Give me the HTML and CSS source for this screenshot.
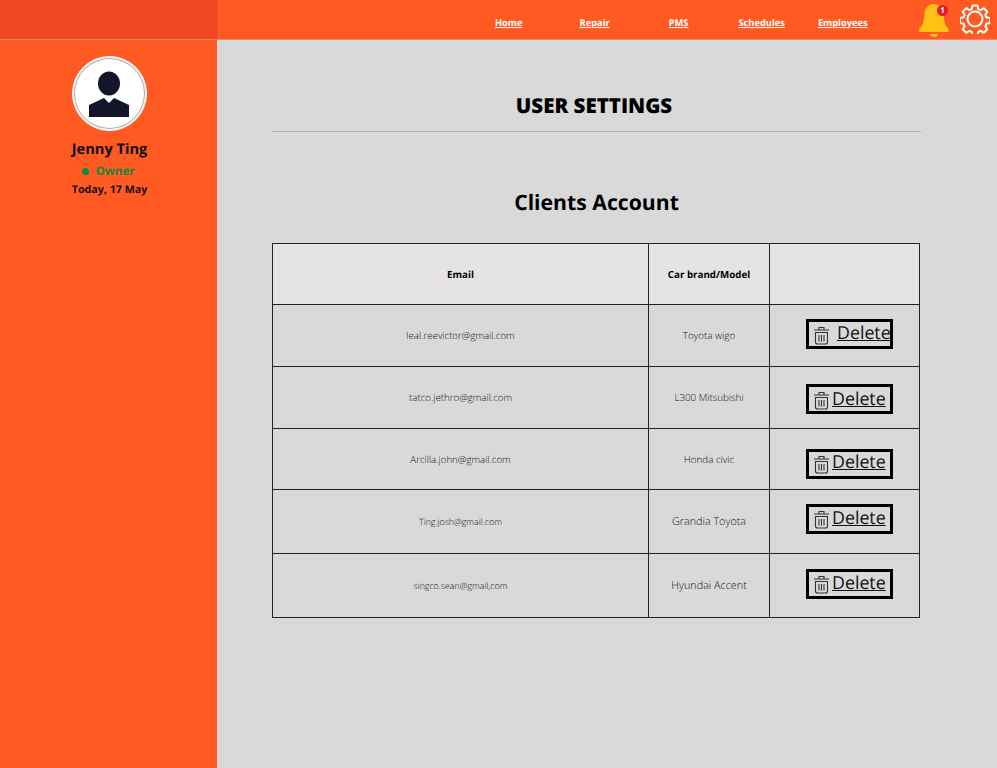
FILE: index.html
```html
<!DOCTYPE html>
<html lang="en">
<head>
<meta charset="utf-8">
<title>User Settings</title>
<link rel="stylesheet" href="styles.css">
</head>
<body>
<header class="topbar">
  <div class="brand"></div>
  <nav class="nav">
    <a class="nav-home" href="#">Home</a>
    <a class="nav-repair" href="#">Repair</a>
    <a class="nav-pms" href="#">PMS</a>
    <a class="nav-sched" href="#">Schedules</a>
    <a class="nav-emp" href="#">Employees</a>
  </nav>
  <div class="top-icons">
    <div class="bell">
      <svg width="32" height="38" viewBox="0 0 32 38"><path fill="#ffc112" d="M16 4c-6 0-9 4.500-9.500 10-.5 6-1 11-5 15-.8 1-.4 3 1 3h27c1.400 0 1.800-2 1-3-4-4-4.500-9-5-15C25 8.500 22 4 16 4z"/><path fill="#ffc112" d="M12 34h8c-.5 2-2 3-4 3s-3.500-1-4-3z"/></svg>
      <span class="badge">1</span>
    </div>
    <svg class="gear" width="30" height="30" viewBox="0 0 30 30" fill="none" stroke="#fff" stroke-width="2" stroke-linejoin="round"><path d="M12.500 1.500h5l.8 3.700 2.300 1 3.200-2 3.500 3.500-2 3.200 1 2.300 3.700.8v5l-3.700.8-1 2.300 2 3.200-3.500 3.500-3.200-2-2.300 1-.8 3.700h-5l-.8-3.700-2.300-1-3.200 2-3.500-3.500 2-3.200-1-2.300-3.700-.8v-5l3.700-.8 1-2.300-2-3.200 3.500-3.500 3.200 2 2.300-1z"/><circle cx="15" cy="15" r="7.500"/></svg>
  </div>
</header>
<div class="shell">
  <aside class="sidebar">
    <div class="avatar">
      <svg width="66" height="66" viewBox="0 0 66 66"><ellipse cx="33" cy="22.500" rx="11" ry="12" fill="#14142b"/><path fill="#14142b" d="M13 44l15-7 5 5 5-5 15 7v12H13z"/></svg>
    </div>
    <div class="user-name">Jenny Ting</div>
    <div class="user-role"><span class="dot"></span>Owner</div>
    <div class="user-date">Today, 17 May</div>
  </aside>
  <main class="content">
    <h1 class="page-title">USER SETTINGS</h1>
    <h2 class="section-title">Clients Account</h2>
    <table class="clients">
      <colgroup><col class="c-email"><col class="c-car"><col class="c-act"></colgroup>
      <thead>
        <tr class="r-head"><th>Email</th><th>Car brand/Model</th><th></th></tr>
      </thead>
      <tbody>
        <tr class="r1"><td class="email">leal.reevictor@gmail.com</td><td class="car">Toyota wigo</td><td><a class="del wide" href="#"><svg class="trash" width="17" height="20" viewBox="0 0 17 20" fill="none" stroke="#333" stroke-width="1.100"><path d="M1 5h15M6 4.500V2.500h5v2M2.500 7.500h12V17a2 2 0 0 1-2 2h-8a2 2 0 0 1-2-2z"/><path d="M6 10v6.500M8.500 10v6.500M11 10v6.500"/></svg><span>Delete</span></a></td></tr>
        <tr class="r2"><td class="email">tatco.jethro@gmail.com</td><td class="car">L300 Mitsubishi</td><td><a class="del" href="#"><svg class="trash" width="17" height="20" viewBox="0 0 17 20" fill="none" stroke="#333" stroke-width="1.100"><path d="M1 5h15M6 4.500V2.500h5v2M2.500 7.500h12V17a2 2 0 0 1-2 2h-8a2 2 0 0 1-2-2z"/><path d="M6 10v6.500M8.500 10v6.500M11 10v6.500"/></svg><span>Delete</span></a></td></tr>
        <tr class="r3"><td class="email">Arcilla.john@gmail.com</td><td class="car">Honda civic</td><td><a class="del" href="#"><svg class="trash" width="17" height="20" viewBox="0 0 17 20" fill="none" stroke="#333" stroke-width="1.100"><path d="M1 5h15M6 4.500V2.500h5v2M2.500 7.500h12V17a2 2 0 0 1-2 2h-8a2 2 0 0 1-2-2z"/><path d="M6 10v6.500M8.500 10v6.500M11 10v6.500"/></svg><span>Delete</span></a></td></tr>
        <tr class="r4"><td class="email small">Ting.josh@gmail.com</td><td class="car big">Grandia Toyota</td><td><a class="del" href="#"><svg class="trash" width="17" height="20" viewBox="0 0 17 20" fill="none" stroke="#333" stroke-width="1.100"><path d="M1 5h15M6 4.500V2.500h5v2M2.500 7.500h12V17a2 2 0 0 1-2 2h-8a2 2 0 0 1-2-2z"/><path d="M6 10v6.500M8.500 10v6.500M11 10v6.500"/></svg><span>Delete</span></a></td></tr>
        <tr class="r5"><td class="email small">singco.sean@gmail,com</td><td class="car big">Hyundai Accent</td><td><a class="del" href="#"><svg class="trash" width="17" height="20" viewBox="0 0 17 20" fill="none" stroke="#333" stroke-width="1.100"><path d="M1 5h15M6 4.500V2.500h5v2M2.500 7.500h12V17a2 2 0 0 1-2 2h-8a2 2 0 0 1-2-2z"/><path d="M6 10v6.500M8.500 10v6.500M11 10v6.500"/></svg><span>Delete</span></a></td></tr>
      </tbody>
    </table>
  </main>
</div>
</body>
</html>
```
FILE: styles.css
```css
* { box-sizing: border-box; }
html, body { height: 100%; }
body {
  margin: 0;
  height: 768px;
  overflow: hidden;
  font-family: "Open Sans", "Liberation Sans", sans-serif;
  text-rendering: geometricPrecision;
  background: #d9d9d9;
  color: #000;
  display: flex;
  flex-direction: column;
}
.topbar {
  height: 40px;
  flex: none;
  display: flex;
  background: #ff5a22;
  border-bottom: 1px solid #f4835c;
}
.brand {
  width: 219px;
  height: 39px;
  background: #f04a25;
  border-right: 1px solid #f5653a;
}
.nav {
  flex: 1;
  display: flex;
  padding-left: 276px;
  height: 39px;
  align-items: center;
  padding-top: 5px;
}
.nav a {
  color: #fff;
  font-size: 9.300px;
  font-weight: 700;
  text-decoration: underline;
  white-space: nowrap;
}
.nav-repair { margin-left: 57px; }
.nav-pms { margin-left: 59px; }
.nav-sched { margin-left: 50px; }
.nav-emp { margin-left: 33px; }
.top-icons {
  position: absolute;
  top: 0;
  left: 918px;
  display: flex;
  align-items: flex-start;
  gap: 11px;
}
.bell { position: relative; width: 32px; height: 38px; }
.bell svg { display: block; }
.badge {
  position: absolute;
  top: 5px;
  left: 19px;
  width: 11px;
  height: 11px;
  border-radius: 50%;
  background: #e8192c;
  color: #fff;
  font-size: 8px;
  font-weight: 700;
  line-height: 11px;
  text-align: center;
}
.gear { display: block; margin-top: 4px; margin-left: -1px; }
.shell { flex: 1; display: flex; min-height: 0; }
.sidebar {
  width: 217px;
  flex: none;
  background: #ff5a22;
  display: flex;
  flex-direction: column;
  align-items: center;
  padding-top: 16px;
}
.avatar {
  width: 75px;
  height: 75px;
  border-radius: 50%;
  background: #fff;
  border: 1px solid #fff;
  box-shadow: inset 0 0 0 1px #fff, inset 0 0 0 2px #aaa;
  display: flex;
  align-items: center;
  justify-content: center;
  margin-left: 1px;
}
.user-name {
  font-size: 14.600px;
  font-weight: 700;
  line-height: 20px;
  margin-top: 8px;
  color: #111;
  margin-left: 2px;
}
.user-role {
  font-size: 11.700px;
  font-weight: 700;
  color: #0e8a3c;
  line-height: 16px;
  margin-top: 4px;
  display: flex;
  align-items: center;
}
.dot {
  width: 7px;
  height: 7px;
  border-radius: 50%;
  background: #0e8a3c;
  margin-right: 6px;
}
.user-date {
  font-size: 10.700px;
  font-weight: 700;
  line-height: 16px;
  margin-top: 3px;
  color: #111;
  margin-left: 2px;
}
.content {
  flex: 1;
  padding: 0 0 0 55px;
}
.page-title {
  margin: 0;
  height: 91px;
  padding-top: 53px;
  font-size: 20.500px;
  font-weight: 800;
  line-height: 27px;
  text-align: center;
  box-shadow: 0 1px 0 #b5b5b5;
  width: 649px;
  padding-right: 5px;
}
.section-title {
  width: 649px;
  margin: 58px 0 26px;
  font-size: 21.200px;
  font-weight: 700;
  line-height: 28px;
  text-align: center;
}
.clients {
  width: 648px;
  table-layout: fixed;
  border-collapse: collapse;
  border: 1px solid #222;
}
.c-email { width: 376px; }
.c-car { width: 121px; }
.clients th, .clients td {
  border: 1px solid #222;
  padding: 0;
  text-align: center;
  vertical-align: middle;
}
.clients th {
  background: #e6e3e4;
  font-size: 9.750px;
  font-weight: 700;
}
.r-head { height: 61px; }
.r1 { height: 62px; }
.r2 { height: 62px; }
.r3 { height: 61px; }
.r4 { height: 64px; }
.r5 { height: 64px; }
.email { font-size: 9.700px; font-weight: 300; color: #111; }
.email.small { font-size: 8.800px; }
.car { font-size: 9.800px; font-weight: 300; color: #111; }
.car.big { font-size: 10.800px; }
.del {
  display: flex;
  align-items: center;
  width: 87px;
  height: 30px;
  margin-left: 36px;
  border: 3px solid #000;
  color: #111;
  font-size: 17.800px;
  font-weight: 400;
  text-decoration: underline;
  padding-left: 4px;
}
.del span { margin-left: 2px; line-height: 24px; margin-top: -1px; }
.del.wide span { margin-left: 7px; margin-top: -3px; }
.r3 .del span { margin-top: -3px; }
.trash { flex: none; margin-top: 1px; }
.r1 .del { margin-top: -3px; }
.r2 .del { margin-top: 3px; }
.r3 .del { margin-top: 9px; }
.r4 .del { margin-top: -6px; }
.r5 .del { margin-top: -4px; }
```
